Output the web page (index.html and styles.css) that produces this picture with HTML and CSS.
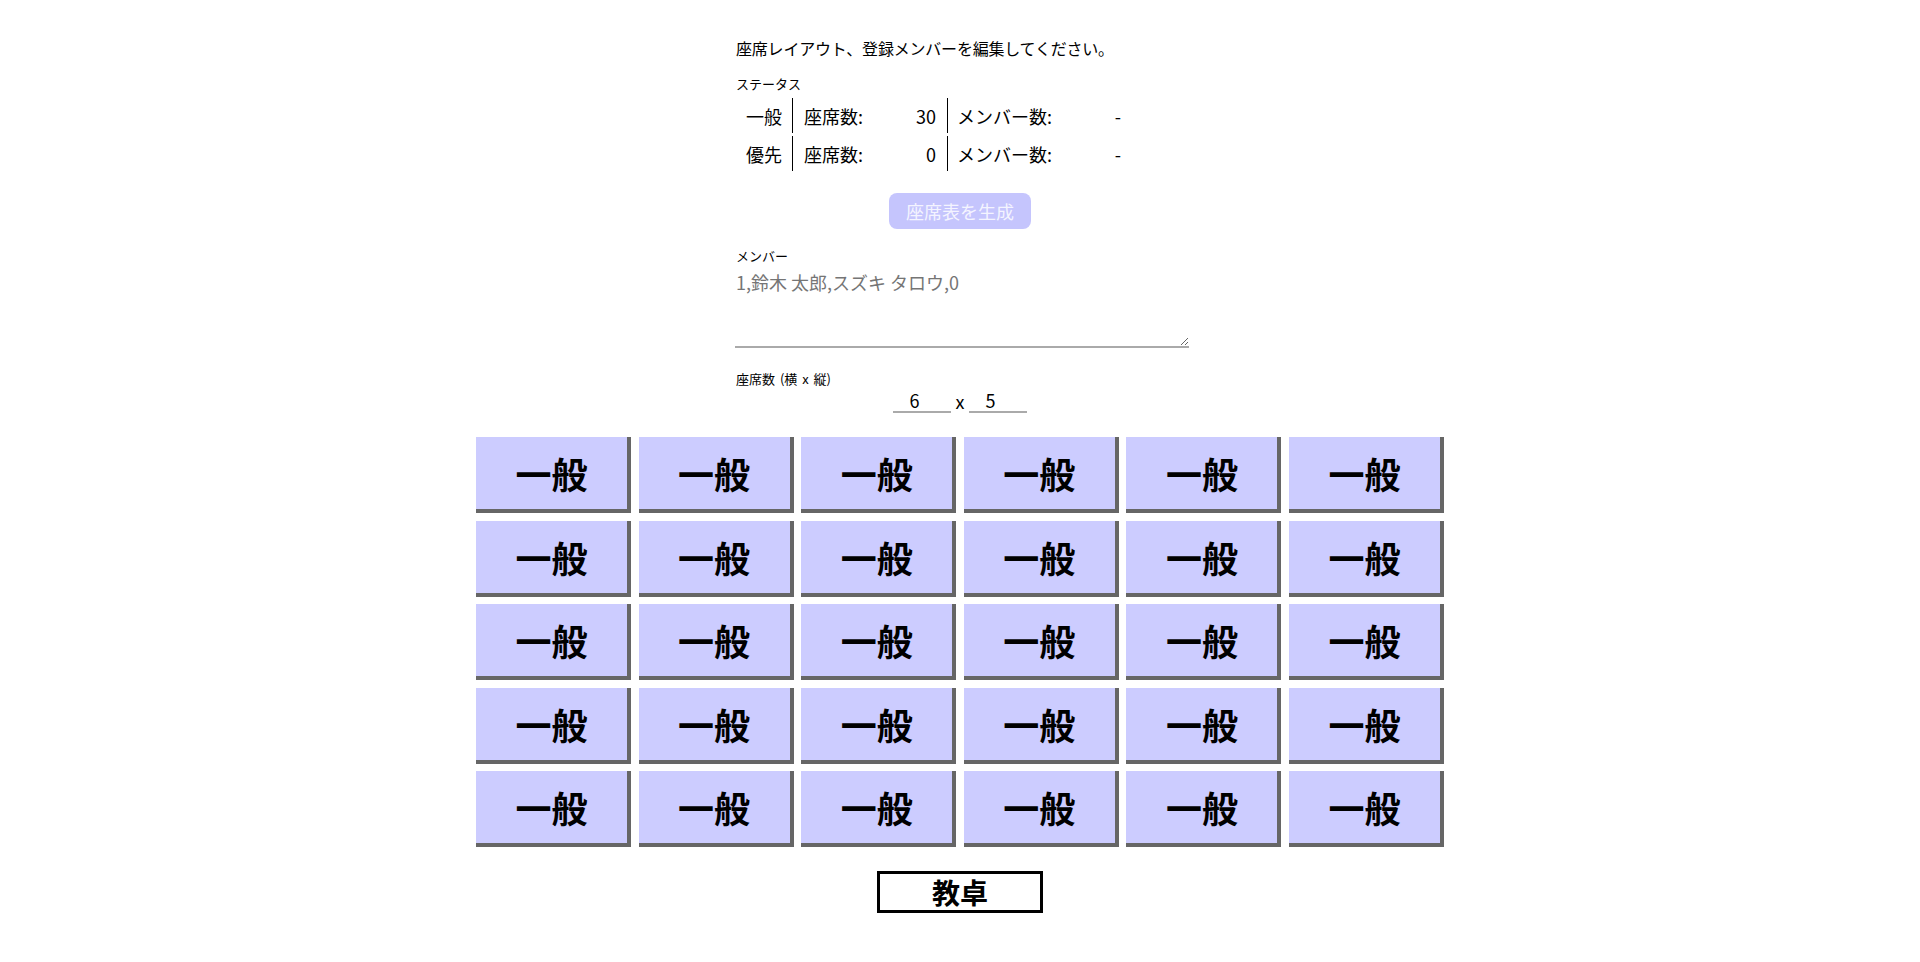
FILE: index.html
```html
<!DOCTYPE html>
<html lang="ja">
<head>
<meta charset="utf-8">
<title>座席表</title>
<link rel="stylesheet" href="styles.css">
</head>
<body>
<div class="page">
  <div class="form">
    <p class="intro">座席レイアウト、登録メンバーを編集してください。</p>
    <div class="label">ステータス</div>
    <div class="status">
      <div class="c-type">一般</div>
      <div class="c-seat"><span>座席数:</span><span>30</span></div>
      <div class="c-mem"><span>メンバー数:</span><span>-</span></div>
      <div class="c-type">優先</div>
      <div class="c-seat"><span>座席数:</span><span>0</span></div>
      <div class="c-mem"><span>メンバー数:</span><span>-</span></div>
    </div>
    <div class="btn-row"><button class="gen" disabled>座席表を生成</button></div>
    <div class="label label-member">メンバー</div>
    <textarea class="members" placeholder="1,鈴木 太郎,スズキ タロウ,0"></textarea>
    <div class="label label-size">座席数 (横 x 縦)</div>
    <div class="size-row">
      <input class="num" type="text" value="6">
      <span class="times">x</span>
      <input class="num" type="text" value="5">
    </div>
  </div>
  <div class="seats">
    <div class="seat">一般</div><div class="seat">一般</div><div class="seat">一般</div><div class="seat">一般</div><div class="seat">一般</div><div class="seat">一般</div>
    <div class="seat">一般</div><div class="seat">一般</div><div class="seat">一般</div><div class="seat">一般</div><div class="seat">一般</div><div class="seat">一般</div>
    <div class="seat">一般</div><div class="seat">一般</div><div class="seat">一般</div><div class="seat">一般</div><div class="seat">一般</div><div class="seat">一般</div>
    <div class="seat">一般</div><div class="seat">一般</div><div class="seat">一般</div><div class="seat">一般</div><div class="seat">一般</div><div class="seat">一般</div>
    <div class="seat">一般</div><div class="seat">一般</div><div class="seat">一般</div><div class="seat">一般</div><div class="seat">一般</div><div class="seat">一般</div>
  </div>
  <div class="desk">教卓</div>
</div>
</body>
</html>
```

FILE: styles.css
```css
html, body {
  margin: 0;
  padding: 0;
  background: #fff;
}
body {
  font-family: "Noto Sans CJK JP", "Noto Sans", sans-serif;
  color: #000;
}
.page {
  display: flex;
  flex-direction: column;
  align-items: center;
  padding-top: 36px;
}
.form {
  width: 448px;
  display: flex;
  flex-direction: column;
}
.intro {
  margin: 0;
  font-size: 16px;
  line-height: 24px;
  letter-spacing: -0.2px;
}
.label {
  font-size: 13px;
  line-height: 18px;
  margin-top: 15px;
}
.status {
  display: grid;
  grid-template-columns: 57px 155px 185px;
  grid-auto-rows: 35px;
  row-gap: 3px;
  margin-top: 5px;
  font-size: 18px;
}
.status > div {
  box-sizing: border-box;
  display: flex;
  align-items: center;
}
.c-type {
  justify-content: flex-end;
  padding-right: 10px;
  border-right: 1px solid #000;
}
.c-seat {
  justify-content: space-between;
  padding: 0 11px;
  border-right: 1px solid #000;
}
.c-mem {
  justify-content: space-between;
  padding: 0 12px 0 9px;
}
.btn-row {
  display: flex;
  justify-content: center;
  margin-top: 22px;
}
.gen {
  width: 142px;
  height: 36px;
  border: none;
  border-radius: 8px;
  background: #c5c5fd;
  color: #f4f4ff;
  font-family: inherit;
  font-size: 18px;
  padding: 0;
}
.label-member {
  margin-top: 18px;
}
.members {
  box-sizing: border-box;
  width: 454px;
  height: 83px;
  margin: 0 0 0 -1px;
  padding: 4px 1px;
  border: none;
  border-bottom: 2px solid #aaa;
  font-family: inherit;
  font-size: 18px;
  line-height: 26px;
  outline: none;
}
.members::placeholder {
  color: #757575;
}
.label-size {
  margin-top: 22px;
  word-spacing: 2px;
}
.size-row {
  display: flex;
  justify-content: center;
  align-items: center;
  margin-top: 1px;
}
.num {
  box-sizing: border-box;
  width: 58px;
  height: 24px;
  margin: 0;
  padding: 0 15px 0 0;
  border: none;
  border-bottom: 2px solid #aaa;
  font-family: inherit;
  font-size: 18px;
  line-height: 22px;
  text-align: center;
  outline: none;
  background: transparent;
  color: #000;
}
.times {
  width: 18px;
  text-align: center;
  font-size: 18px;
  line-height: 22px;
}
.seats {
  display: grid;
  grid-template-columns: repeat(6, 155px);
  grid-auto-rows: 76px;
  column-gap: 7.6px;
  row-gap: 7.5px;
  margin-top: 24px;
}
.seat {
  box-sizing: border-box;
  background: #ccccff;
  border-right: 4px solid #666;
  border-bottom: 4px solid #666;
  display: flex;
  align-items: center;
  justify-content: center;
  font-size: 36px;
  font-weight: bold;
  line-height: 1;
}
.desk {
  box-sizing: border-box;
  width: 166px;
  height: 42px;
  margin-top: 24px;
  border: 3px solid #000;
  display: flex;
  align-items: center;
  justify-content: center;
  font-size: 28px;
  font-weight: bold;
  line-height: 1;
}
```
